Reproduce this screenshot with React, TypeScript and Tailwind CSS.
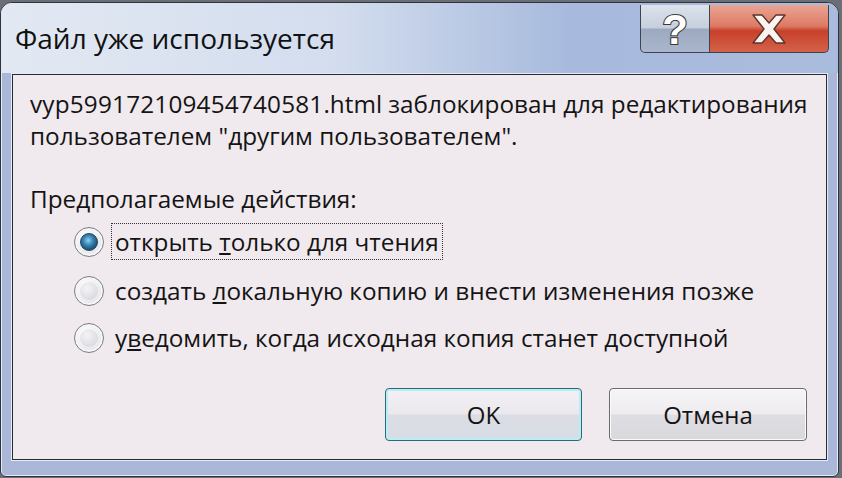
const font = "font-['Open_Sans','Noto_Sans',sans-serif]"

function Radio({ checked }: { checked?: boolean }) {
  return (
    <span className="flex h-[30px] w-[30px] shrink-0 items-center justify-center rounded-full border border-[#7c7f86] bg-[radial-gradient(circle_at_40%_35%,#ffffff,#dcdde2)] shadow-[inset_0_0_0_2px_#f6f6f8]">
      {checked ? (
        <span className="h-[18px] w-[18px] rounded-full border border-[#1d4463] bg-[radial-gradient(circle_at_45%_40%,#8fd0ee_0%,#3b89b8_35%,#18496f_75%)]" />
      ) : (
        <span className="h-[18px] w-[18px] rounded-full bg-[radial-gradient(circle_at_40%_35%,#f4f4f6,#d2d3d8)]" />
      )}
    </span>
  )
}

export default function App() {
  return (
    <div className={`h-[478px] w-[842px] overflow-hidden bg-[#6b6e75] ${font}`}>
      <div className="mt-[2px] mr-[3px] flex h-[475px] flex-col overflow-hidden rounded-t-[12px] rounded-b-[6px] border border-[#2f333b] bg-[#abb7d9] shadow-[inset_0_0_0_1px_#e4eaf5]">
        <div className="flex h-[70px] shrink-0 items-start justify-between bg-[linear-gradient(90deg,#e3e9f3_0%,#d3ddee_40%,#a7badd_68%,#a9bcde_100%)]">
          <div className="pl-[14px] pt-[16px] text-[28px] leading-[38px] text-[#111]">Файл уже используется</div>
          <div className="mr-[9px] mt-[2px] flex h-[48px]">
            <div className="flex w-[70px] items-center justify-center rounded-bl-[5px] border border-t-0 border-[#3e434c] bg-[linear-gradient(180deg,#dde3ec_0%,#c6cfdd_48%,#9ca9bf_52%,#aab6cb_100%)]">
              <svg width="32" height="42" viewBox="0 0 32 42" className="overflow-visible">
                <text x="16" y="36" textAnchor="middle" fontSize="42" fontWeight="700" fontFamily="Liberation Sans, sans-serif" fill="#ffffff" stroke="#3a3a3a" strokeWidth="2.2" paintOrder="stroke">?</text>
              </svg>
            </div>
            <div className="flex w-[119px] items-center justify-center rounded-br-[5px] border border-t-0 border-l-0 border-[#3e434c] bg-[linear-gradient(180deg,#e9a594_0%,#de7a64_45%,#c8402a_55%,#d4624a_100%)]">
              <svg width="42" height="34" viewBox="0 0 42 34">
                <path d="M5 3 L14 3 L21 11 L28 3 L37 3 L26 17 L37 31 L28 31 L21 23 L14 31 L5 31 L16 17 Z" fill="#fbf3ef" stroke="#5a3430" strokeWidth="1.4" strokeLinejoin="round" />
              </svg>
            </div>
          </div>
        </div>
        <div className="mx-[11px] mb-[16px] mt-[1px] flex flex-1 flex-col whitespace-nowrap border border-[#262c36] bg-[#f0e9ee] pl-[17px] pt-[13px] text-[24.3px] leading-[32px] text-[#141414] shadow-[0_0_0_1px_#e6ecf5]">
          <p>
            <span className="tracking-[0.2px]">vyp599172109454740581</span>.html заблокирован для редактирования
          </p>
          <p>пользователем "другим пользователем".</p>
          <p className="mt-[31px]">Предполагаемые действия:</p>
          <div className="ml-[44px] mt-[8px] flex flex-col gap-[15px]">
            <label className="flex items-center gap-[7px]">
              <Radio checked />
              <span className="border border-dotted border-[#333] px-[3px] leading-[35px]">
                открыть <u className="underline-offset-2">т</u>олько для чтения
              </span>
            </label>
            <label className="flex items-center gap-[11px]">
              <Radio />
              <span>
                создать <u className="underline-offset-2">л</u>окальную копию и внести изменения позже
              </span>
            </label>
            <label className="flex items-center gap-[11px]">
              <Radio />
              <span>
                у<u className="underline-offset-2">в</u>едомить, когда исходная копия станет доступной
              </span>
            </label>
          </div>
          <div className="mt-auto mb-[18px] mr-[19px] flex justify-end gap-[27px]">
            <button className="h-[53px] w-[197px] rounded-[4px] border border-[#2d6a78] bg-[linear-gradient(180deg,#f3f1f5_0%,#ebe8ee_48%,#dcdde4_52%,#d7dde6_100%)] text-[24px] text-[#141414] shadow-[inset_0_0_0_2px_#b8eef5]">
              OK
            </button>
            <button className="h-[53px] w-[198px] rounded-[4px] border border-[#6c6c6c] bg-[linear-gradient(180deg,#f6f4f6_0%,#eeecef_48%,#dedde1_52%,#d9d8dc_100%)] text-[24px] text-[#141414] shadow-[inset_0_0_0_1px_#fbfbfb]">
              Отмена
            </button>
          </div>
        </div>
      </div>
    </div>
  )
}
